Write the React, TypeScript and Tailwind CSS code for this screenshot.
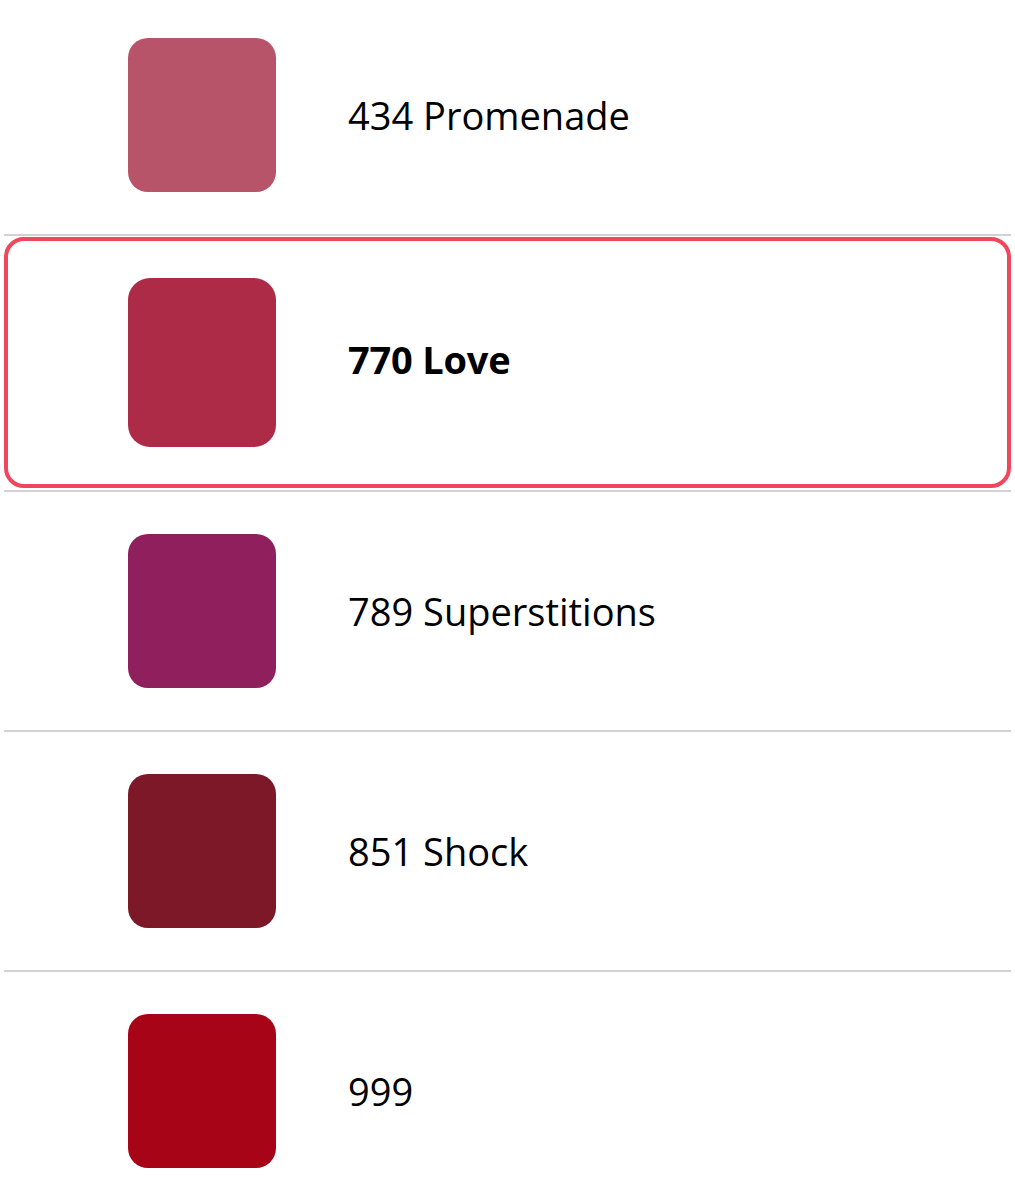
const shades = [
  { code: "434 Promenade", color: "bg-[#b7546a]", h: "h-[234px] pb-[4px]" },
  { code: "770 Love", color: "bg-[#ae2b47]", selected: true },
  { code: "789 Superstitions", color: "bg-[#8f1f5d]", h: "h-[238px]" },
  { code: "851 Shock", color: "bg-[#7d1828]", h: "h-[238px]" },
  { code: "999", color: "bg-[#a70417]", h: "h-[238px]" },
];

export default function App() {
  return (
    <div className="min-h-[1200px] overflow-hidden bg-white px-[4px] font-['Open_Sans',sans-serif] text-black">
      {shades.map((s, i) => (
        <div key={s.code}>
          {s.selected ? (
            <div className="flex h-[251px] items-center rounded-[20px] border-4 border-[#f0475d] pl-[120px]">
              <div className={`h-[169px] w-[148px] rounded-[22px] ${s.color}`} />
              <span className="mb-[6px] ml-[72px] text-[38px] font-bold tracking-[-0.2px]">{s.code}</span>
            </div>
          ) : (
            <div className={`flex items-center pl-[124px] ${s.h}`}>
              <div className={`h-[154px] w-[148px] rounded-[20px] ${s.color}`} />
              <span className="ml-[72px] text-[38px] font-normal">{s.code}</span>
            </div>
          )}
          {i < shades.length - 1 && (
            <div className={`h-[2px] bg-[#d2d2d2] ${s.selected ? "mt-[2px]" : ""} ${i === 0 ? "mb-[1px]" : ""}`} />
          )}
        </div>
      ))}
    </div>
  );
}
